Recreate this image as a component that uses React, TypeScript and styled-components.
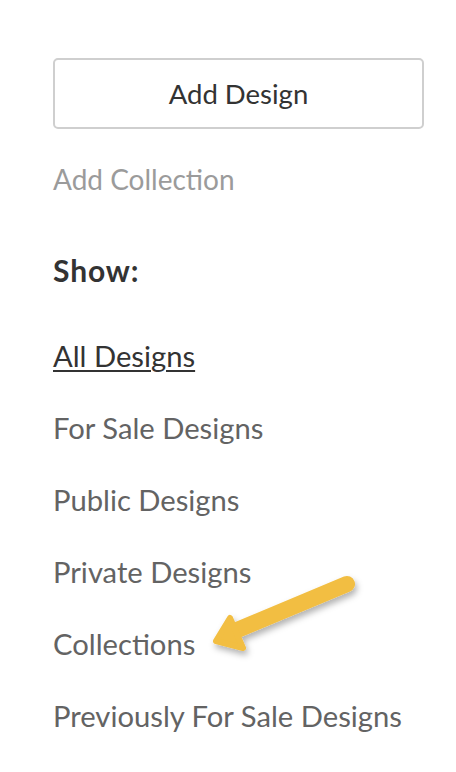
import React from "react"
import styled, { createGlobalStyle } from "styled-components"

const GlobalStyle = createGlobalStyle`
  html, body {
    margin: 0;
    padding: 0;
    background: #ffffff;
  }
  body {
    font-family: Lato, "Open Sans", sans-serif;
    -webkit-font-smoothing: antialiased;
  }
`

const Sidebar = styled.div`
  position: relative;
  width: 456px;
  height: 772px;
  box-sizing: border-box;
  padding: 58px 32px 0 53px;
  display: flex;
  flex-direction: column;
`

const AddButton = styled.button`
  width: 371px;
  height: 71px;
  box-sizing: border-box;
  border: 2px solid #cfcfcf;
  border-radius: 5px;
  background: #fff;
  font-family: Lato, sans-serif;
  font-size: 27.5px;
  color: #333333;
  cursor: pointer;
`

const TextLink = styled.a`
  margin-top: 35px;
  font-size: 28px;
  line-height: 30px;
  color: #9b9b9b;
  text-decoration: none;
`

const Heading = styled.h3`
  margin: 61px 0 0 0;
  font-size: 30px;
  line-height: 30px;
  font-weight: 700;
  letter-spacing: 0.9px;
  color: #333333;
`

const FilterList = styled.ul`
  list-style: none;
  margin: 35px 0 0 0;
  padding: 0;
`

const FilterItem = styled.li<{ $active?: boolean }>`
  height: 72px;
  line-height: 72px;
  font-size: 29.2px;
  color: ${(p) => (p.$active ? "#333333" : "#636363")};
  text-decoration: ${(p) => (p.$active ? "underline" : "none")};
  text-underline-offset: 3px;
  text-decoration-thickness: 2px;
`

const Pointer = styled.svg`
  position: absolute;
  left: 200px;
  top: 565px;
  overflow: visible;
`

const items = [
  "All Designs",
  "For Sale Designs",
  "Public Designs",
  "Private Designs",
  "Collections",
  "Previously For Sale Designs",
]

export default function App() {
  return (
    <>
      <GlobalStyle />
      <Sidebar>
        <AddButton>Add Design</AddButton>
        <TextLink>Add Collection</TextLink>
        <Heading>Show:</Heading>
        <FilterList>
          {items.map((label, i) => (
            <FilterItem key={label} $active={i === 0}>
              {label}
            </FilterItem>
          ))}
        </FilterList>
        <Pointer width="170" height="100" viewBox="0 0 170 100">
          <defs>
            <filter id="arrowShadow" x="-20%" y="-30%" width="150%" height="180%">
              <feDropShadow dx="2" dy="4" stdDeviation="3" floodColor="#000" floodOpacity="0.3" />
            </filter>
          </defs>
          <g filter="url(#arrowShadow)" fill="#f2be42" stroke="#f2be42" strokeLinecap="round" strokeLinejoin="round">
            <line x1="147" y1="19" x2="30" y2="68" strokeWidth="16" />
            <polygon points="16,76 30,53 43,83" strokeWidth="6" />
          </g>
        </Pointer>
      </Sidebar>
    </>
  )
}
